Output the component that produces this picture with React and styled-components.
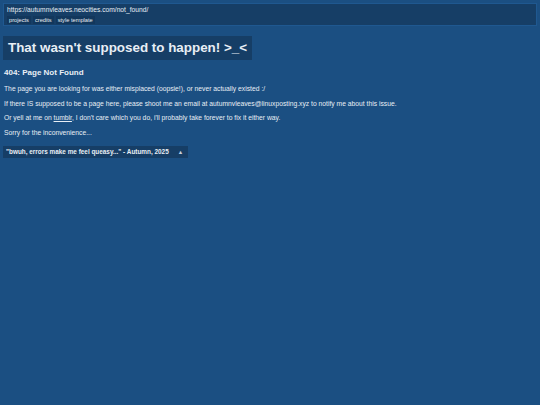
import React from "react";
import styled, { createGlobalStyle } from "styled-components";

const COLORS = {
  page: "#1b4f82",
  panel: "#163e66",
  tag: "#12375c",
  text: "#e8eef5",
  border: "#1f5890"
};

const GlobalStyle = createGlobalStyle`
  html, body {
    margin: 0;
    padding: 0;
    background: ${COLORS.page};
  }
  body {
    font-family: "Liberation Sans", Arial, sans-serif;
    color: ${COLORS.text};
    min-height: 405px;
  }
`;

const NAV = ["projects", "credits", "style template"];

const App = () => {
  return (
    <>
      <GlobalStyle />
      <Page>
        <Header>
          <Url>https://autumnvleaves.neocities.com/not_found/</Url>
          <Nav>
            {NAV.map(item => (
              <NavTag key={item}>{item}</NavTag>
            ))}
          </Nav>
        </Header>
        <Title>That wasn't supposed to happen! &gt;_&lt;</Title>
        <Subtitle>404: Page Not Found</Subtitle>
        <Para>
          The page you are looking for was either misplaced (oopsie!), or never
          actually existed :/
        </Para>
        <Para>
          If there IS supposed to be a page here, please shoot me an email at
          autumnvleaves@linuxposting.xyz to notify me about this issue.
        </Para>
        <Para>
          Or yell at me on <Link href="#">tumblr</Link>, I don't care which you
          do, i'll probably take forever to fix it either way.
        </Para>
        <Para>Sorry for the inconvenience...</Para>
        <Quote>
          "bwuh, errors make me feel queasy..." - Autumn, 2025
          <Mark>▲</Mark>
        </Quote>
      </Page>
    </>
  );
};

const Page = styled.div`
  display: flex;
  flex-direction: column;
  align-items: flex-start;
  padding: 3px 3px;
`;

const Header = styled.header`
  align-self: stretch;
  background: ${COLORS.panel};
  border: 1px solid ${COLORS.border};
  padding: 1px 3px 1px;
  display: flex;
  flex-direction: column;
  gap: 2px;
`;

const Url = styled.div`
  font-size: 6.7px;
  line-height: 9px;
`;

const Nav = styled.nav`
  display: flex;
  gap: 2px;
`;

const NavTag = styled.span`
  background: ${COLORS.tag};
  font-size: 5.7px;
  line-height: 8px;
  padding: 0 2px;
`;

const Title = styled.h1`
  margin: 10px 0 0;
  background: ${COLORS.panel};
  font-size: 13.4px;
  font-weight: bold;
  line-height: 24px;
  padding: 0 5px;
`;

const Subtitle = styled.h2`
  margin: 8px 0 4px 1px;
  font-size: 8px;
  font-weight: bold;
  line-height: 10px;
`;

const Para = styled.p`
  margin: 0 0 0 1px;
  font-size: 6.75px;
  line-height: 14.5px;
`;

const Link = styled.a`
  color: inherit;
  text-decoration: underline;
`;

const Quote = styled.div`
  margin-top: 6px;
  background: ${COLORS.panel};
  font-size: 6.4px;
  font-weight: bold;
  line-height: 12px;
  padding: 0 5px 0 3px;
  display: flex;
  align-items: center;
  gap: 9px;
`;

const Mark = styled.span`
  font-size: 5.5px;
  font-weight: normal;
  opacity: 0.85;
`;

export default App;
